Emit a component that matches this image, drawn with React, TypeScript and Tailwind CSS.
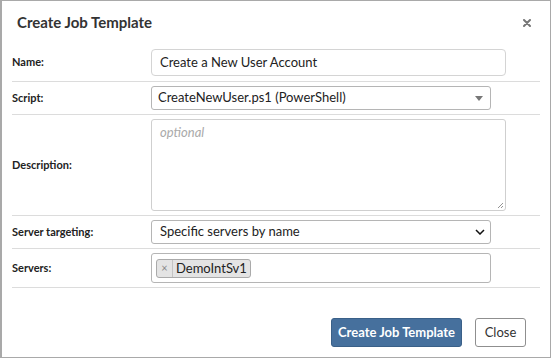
import React from "react";

const font = { fontFamily: 'Lato, "Noto Sans", sans-serif' };

function Row({
  label,
  children,
  className = "",
}: {
  label: string;
  children: React.ReactNode;
  className?: string;
}) {
  return (
    <div className={`flex items-center border-b border-[#dcdcdc] ${className}`}>
      <div className="w-[139px] shrink-0 text-[11px] font-bold text-[#222]">{label}</div>
      <div className="flex-1">{children}</div>
    </div>
  );
}

export default function App() {
  return (
    <div
      className="w-[551px] h-[358px] bg-white border border-[#a9a9a9] border-l-2 flex flex-col text-[#222]"
      style={font}
    >
      {/* Header */}
      <div className="h-[43px] shrink-0 flex items-center justify-between pl-[15px] pr-[19px]">
        <h2 className="text-[15px] font-bold text-[#333]">Create Job Template</h2>
        <svg width="8" height="8" viewBox="0 0 8 8" className="mt-[1px]">
          <path d="M1 1 L7 7 M7 1 L1 7" stroke="#777" strokeWidth="2" strokeLinecap="round" />
        </svg>
      </div>

      {/* Form */}
      <div className="pl-[10px] pr-[10px]">
        <Row label="Name:" className="py-[5px]">
          <div className="w-[355px] h-[27px] border border-[#d4d4d4] rounded-[4px] flex items-center px-[8px] text-[13px]">
            Create a New User Account
          </div>
        </Row>
        <Row label="Script:" className="py-[4px]">
          <div className="w-[340px] h-[24px] border border-[#b5b5b5] rounded-[3px] flex items-center justify-between pl-[6px] pr-[7px] text-[13px]">
            <span>CreateNewUser.ps1 (PowerShell)</span>
            <svg width="8" height="5" viewBox="0 0 8 5">
              <path d="M0 0 L8 0 L4 5 Z" fill="#777" />
            </svg>
          </div>
        </Row>
        <Row label="Description:" className="py-[4px]">
          <div className="relative w-[355px] h-[92px] border border-[#cfcfcf] rounded-[3px] px-[8px] pt-[3px] text-[13px] italic text-[#aaa]">
            optional
            <svg width="8" height="8" viewBox="0 0 8 8" className="absolute right-[1px] bottom-[1px]">
              <path d="M7 2 L2 7 M7 5 L5 7" stroke="#888" strokeWidth="0.9" />
            </svg>
          </div>
        </Row>
        <Row label="Server targeting:" className="py-[4px]">
          <div className="w-[340px] h-[24px] border border-[#b5b5b5] rounded-[3px] flex items-center justify-between pl-[8px] pr-[5px] text-[13px]">
            <span>Specific servers by name</span>
            <svg width="10" height="6" viewBox="0 0 10 6">
              <path d="M1 1 L5 5 L9 1" fill="none" stroke="#111" strokeWidth="1.5" />
            </svg>
          </div>
        </Row>
        <Row label="Servers:" className="py-[4px]">
          <div className="w-[340px] h-[30px] border border-[#b5b5b5] rounded-[3px] flex items-center pl-[4px]">
            <div className="h-[19px] flex items-stretch border border-[#aaa] rounded-[3px] bg-[#e4e4e4] text-[13px]">
              <span className="w-[16px] flex items-center justify-center border-r border-[#c4c4c4] text-[#888] text-[11px]">
                ×
              </span>
              <span className="px-[3px] flex items-center leading-none">DemoIntSv1</span>
            </div>
          </div>
        </Row>
      </div>

      {/* Footer */}
      <div className="flex-1 flex items-end justify-end gap-[13px] pr-[24px] pb-[10px]">
        <button className="h-[29px] w-[131px] rounded-[3px] bg-[#46709d] border border-[#3a6088] text-white text-[13px] font-bold">
          Create Job Template
        </button>
        <button className="h-[29px] w-[51px] rounded-[3px] bg-white border border-[#8f8f8f] text-[#333] text-[13px]">
          Close
        </button>
      </div>
    </div>
  );
}
